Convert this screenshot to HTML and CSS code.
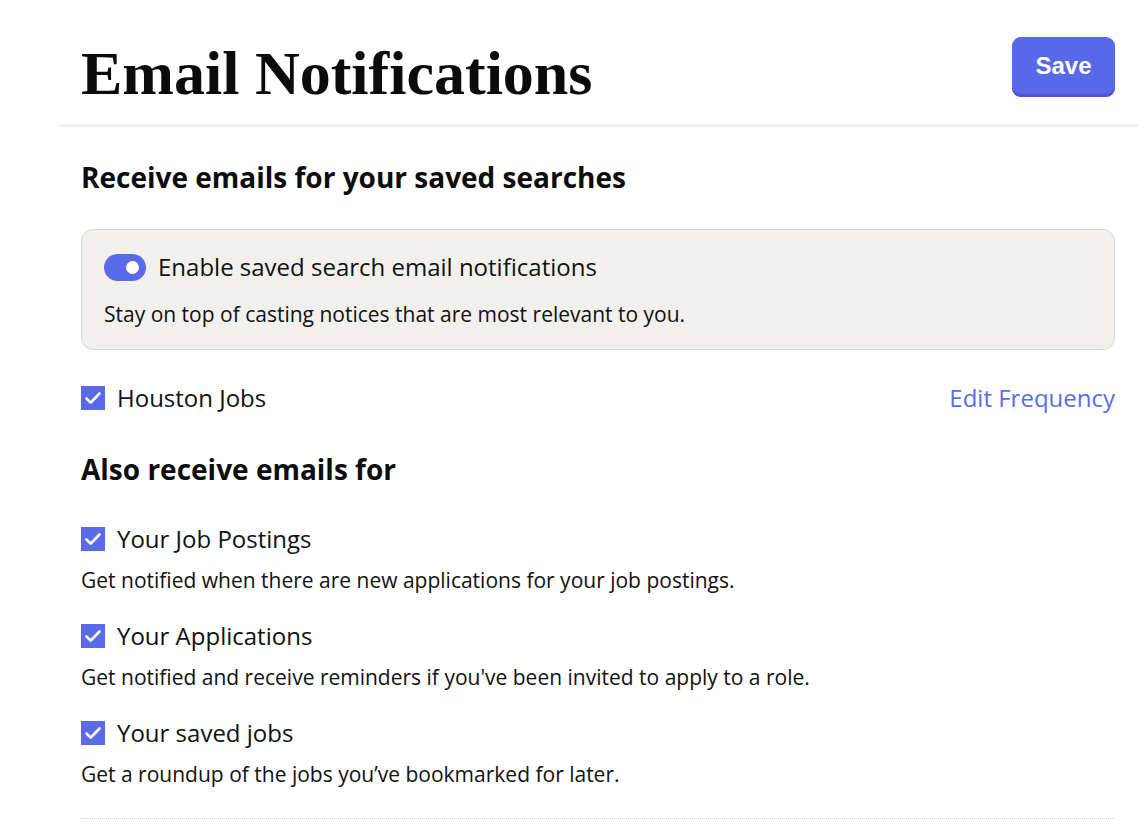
FILE: index.html
```html
<!DOCTYPE html>
<html lang="en">
<head>
<meta charset="utf-8">
<title>Email Notifications</title>
<link rel="stylesheet" href="styles.css">
</head>
<body>
<div class="page">
  <header class="header">
    <h1 class="title">Email Notifications</h1>
    <button class="save-btn" type="button">Save</button>
  </header>
  <main class="content">
    <h2 class="section-title first">Receive emails for your saved searches</h2>
    <div class="card">
      <label class="toggle-row">
        <span class="toggle"><span class="knob"></span></span>
        <span class="toggle-label">Enable saved search email notifications</span>
      </label>
      <p class="card-desc">Stay on top of casting notices that are most relevant to you.</p>
    </div>
    <div class="search-row">
      <label class="check-row">
        <span class="checkbox"><svg viewBox="0 0 24 24" width="24" height="24"><path d="M5.5 12.5l4.2 4.2L18.5 7.5" fill="none" stroke="#fff" stroke-width="2.6" stroke-linecap="round" stroke-linejoin="round"/></svg></span>
        <span class="check-label">Houston Jobs</span>
      </label>
      <a class="edit-link" href="#">Edit Frequency</a>
    </div>
    <h2 class="section-title second">Also receive emails for</h2>
    <div class="option">
      <label class="check-row">
        <span class="checkbox"><svg viewBox="0 0 24 24" width="24" height="24"><path d="M5.5 12.5l4.2 4.2L18.5 7.5" fill="none" stroke="#fff" stroke-width="2.6" stroke-linecap="round" stroke-linejoin="round"/></svg></span>
        <span class="check-label">Your Job Postings</span>
      </label>
      <p class="option-desc">Get notified when there are new applications for your job postings.</p>
    </div>
    <div class="option">
      <label class="check-row">
        <span class="checkbox"><svg viewBox="0 0 24 24" width="24" height="24"><path d="M5.5 12.5l4.2 4.2L18.5 7.5" fill="none" stroke="#fff" stroke-width="2.6" stroke-linecap="round" stroke-linejoin="round"/></svg></span>
        <span class="check-label">Your Applications</span>
      </label>
      <p class="option-desc">Get notified and receive reminders if you've been invited to apply to a role.</p>
    </div>
    <div class="option">
      <label class="check-row">
        <span class="checkbox"><svg viewBox="0 0 24 24" width="24" height="24"><path d="M5.5 12.5l4.2 4.2L18.5 7.5" fill="none" stroke="#fff" stroke-width="2.6" stroke-linecap="round" stroke-linejoin="round"/></svg></span>
        <span class="check-label">Your saved jobs</span>
      </label>
      <p class="option-desc">Get a roundup of the jobs you’ve bookmarked for later.</p>
    </div>
    <div class="bottom-rule"></div>
  </main>
</div>
</body>
</html>
```

FILE: styles.css
```css
* { box-sizing: border-box; }
html, body { margin: 0; padding: 0; background: #fff; }
body {
  font-family: "Open Sans", "Noto Sans", sans-serif;
  color: #111;
}
.page {
  width: 1079px;
  margin-left: 59px;
}
.header {
  display: flex;
  align-items: center;
  justify-content: space-between;
  height: 127px;
  padding: 10px 23px 0 22px;
  border-bottom: 3px solid #f0efeb;
}
.title {
  margin: 12px 0 0;
  font-family: "Liberation Serif", "Times New Roman", serif;
  font-weight: 700;
  font-size: 62px;
  line-height: 70px;
  color: #0b0b0b;
}
.save-btn {
  width: 103px;
  height: 60px;
  border: none;
  border-radius: 9px;
  background: #5868e9;
  box-shadow: inset 0 -3px 0 #4a58cc;
  color: #fff;
  font-family: "Liberation Sans", Arial, sans-serif;
  font-weight: 700;
  font-size: 24px;
  padding: 0 0 2px;
}
.content {
  padding: 0 23px 0 22px;
}
.section-title {
  margin: 0;
  font-weight: 700;
  font-size: 28px;
  color: #0d0d0d;
  line-height: 36px;
}
.section-title.first { padding-top: 32px; }
.section-title.second { padding-top: 38px; }
.card {
  margin-top: 34px;
  background: #f1f0ec;
  border: 1px solid #d8d6d0;
  border-radius: 12px;
  padding: 22px 22px 23px;
}
.toggle-row {
  display: flex;
  align-items: center;
  gap: 12px;
}
.toggle {
  width: 42px;
  height: 27px;
  border-radius: 14px;
  background: #5b6be8;
  display: flex;
  align-items: center;
  justify-content: flex-end;
  padding-right: 7px;
}
.knob {
  width: 13px;
  height: 13px;
  border-radius: 50%;
  background: #fff;
}
.toggle-label {
  font-size: 24px;
  line-height: 30px;
}
.card-desc {
  margin: 20px 0 0;
  font-size: 21px;
  line-height: 24px;
}
.search-row {
  display: flex;
  align-items: center;
  justify-content: space-between;
  margin-top: 33px;
}
.check-row {
  display: flex;
  align-items: center;
  gap: 12px;
}
.checkbox {
  width: 24px;
  height: 24px;
  background: #5b6be8;
  display: block;
}
.checkbox svg { display: block; }
.check-label {
  font-size: 24px;
  line-height: 30px;
}
.edit-link {
  color: #5b6be8;
  text-decoration: none;
  font-size: 24px;
  line-height: 30px;
}
.option { margin-top: 29px; }
.second + .option { margin-top: 37px; }
.option-desc {
  margin: 14px 0 0;
  font-size: 21px;
  line-height: 24px;
}
.bottom-rule {
  margin-top: 32px;
  border-top: 1px dotted #cfcfcf;
}
```
